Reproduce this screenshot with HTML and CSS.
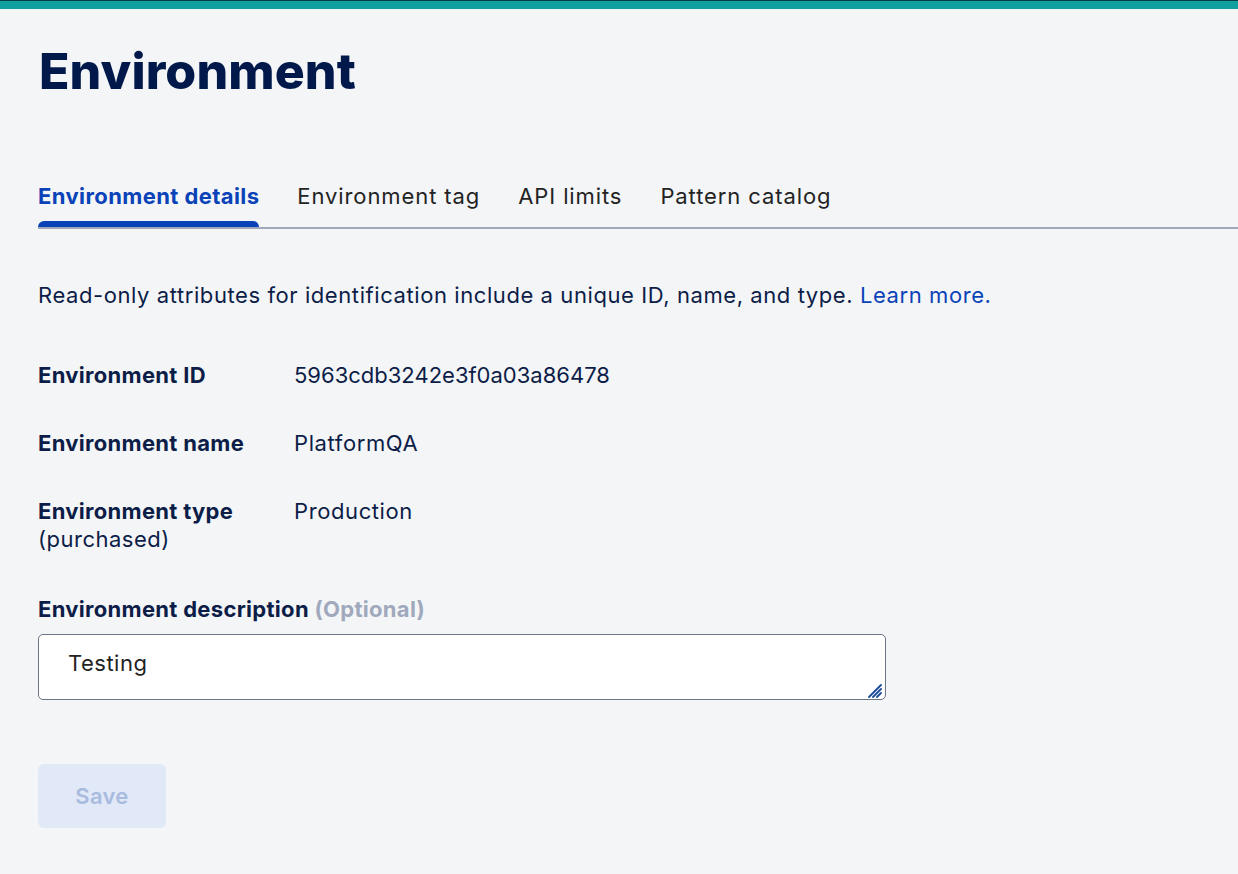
FILE: index.html
```html
<!DOCTYPE html>
<html lang="en">

<head>
    <meta charset="UTF-8">
    <meta name="viewport" content="width=device-width, initial-scale=1.0">
    <title>Environment</title>
    <link rel="stylesheet" href="styles.css">
</head>

<body>

    <!-- Top accent bar -->
    <div class="topbar"></div>

    <main class="page">
        <h1 class="title">Environment</h1>

        <!-- Tabs -->
        <nav class="tabs">
            <a class="tab active" href="#">Environment details</a>
            <a class="tab" href="#">Environment tag</a>
            <a class="tab" href="#">API limits</a>
            <a class="tab" href="#">Pattern catalog</a>
        </nav>

        <p class="intro">Read-only attributes for identification include a unique ID, name, and type. <a href="#">Learn more.</a></p>

        <!-- Attributes -->
        <dl class="attrs">
            <div class="row">
                <dt>Environment ID</dt>
                <dd class="id">5963cdb3242e3f0a03a86478</dd>
            </div>
            <div class="row">
                <dt>Environment name</dt>
                <dd>PlatformQA</dd>
            </div>
            <div class="row">
                <dt>Environment type<span class="sub">(purchased)</span></dt>
                <dd>Production</dd>
            </div>
        </dl>

        <!-- Description -->
        <label class="field-label" for="desc">Environment description <span class="optional">(Optional)</span></label>
        <div class="textarea-wrap">
            <textarea id="desc" class="textarea">Testing</textarea>
            <svg class="grip" width="15" height="15" viewBox="0 0 15 15">
                <path d="M2 14 L14 2 M6 14 L14 6 M10 14 L14 10" stroke="#1d4a9a" stroke-width="1.8" stroke-linecap="round"/>
            </svg>
        </div>

        <button class="save" disabled>Save</button>
    </main>

</body>

</html>
```

FILE: styles.css
```css
html, body {
    margin: 0;
    padding: 0;
    height: 100%;
}

body {
    background-color: #f4f5f7;
    font-family: "Inter", "Noto Sans", sans-serif;
    font-size: 22px;
    letter-spacing: 0.5px;
    color: #0c1d48;
}

.topbar {
    height: 8px;
    background-color: #0fa09f;
    border-top: 1px solid #0a3b47;
}

.page {
    padding: 0 38px;
}

.title {
    margin: 0 0 0 1px;
    padding-top: 32px;
    font-size: 50px;
    font-weight: 800;
    line-height: 60px;
    letter-spacing: 0.1px;
    color: #00194a;
}

/* Tabs */
.tabs {
    display: flex;
    gap: 38px;
    margin: 80px -38px 0 0;
    border-bottom: 2px solid #9ea8ba;
}

.tab {
    position: relative;
    padding: 0 0 16px;
    line-height: 30px;
    letter-spacing: 0.9px;
    color: #232323;
    text-decoration: none;
}

.tab.active {
    font-weight: 700;
    letter-spacing: 0.4px;
    color: #0a42b8;
}

.tab.active::after {
    content: "";
    position: absolute;
    left: 0;
    right: 0;
    bottom: 0;
    height: 6px;
    background-color: #0a42b8;
    border-radius: 6px 6px 0 0;
}

.intro {
    margin: 51px 0 0;
    line-height: 30px;
    letter-spacing: 0.58px;
}

.intro a {
    color: #0a42b8;
    text-decoration: none;
}

/* Attribute rows */
.attrs {
    margin: 51px 0 0;
}

.row {
    display: flex;
    margin-bottom: 40px;
    line-height: 28px;
}

.row dt {
    width: 256px;
    font-weight: 700;
    letter-spacing: 0.3px;
}

.row dd {
    margin: 0;
    letter-spacing: 0.6px;
}

.row dd.id {
    letter-spacing: 0;
}

.sub {
    display: block;
    font-weight: 400;
    letter-spacing: 0.5px;
}

/* Description field */
.field-label {
    display: block;
    margin-top: 42px;
    font-weight: 700;
    line-height: 28px;
    letter-spacing: 0.3px;
}

.optional {
    color: #a0a9bc;
}

.textarea-wrap {
    position: relative;
    width: 848px;
    margin-top: 11px;
}

.textarea {
    display: block;
    box-sizing: border-box;
    width: 100%;
    height: 66px;
    padding: 14px 29px;
    border: 1px solid #6c7488;
    border-radius: 5px;
    background: #fff;
    font-family: "Inter", "Noto Sans", sans-serif;
    font-size: 22px;
    line-height: 28px;
    letter-spacing: 0.5px;
    color: #232323;
    resize: none;
}

.grip {
    position: absolute;
    right: 4px;
    bottom: 2px;
}

.save {
    display: block;
    margin-top: 64px;
    width: 128px;
    height: 64px;
    border: none;
    border-radius: 6px;
    background-color: #e1e8f8;
    color: #a9bbdf;
    font-family: "Inter", "Noto Sans", sans-serif;
    font-size: 22px;
    font-weight: 600;
    letter-spacing: 0.3px;
}
```
